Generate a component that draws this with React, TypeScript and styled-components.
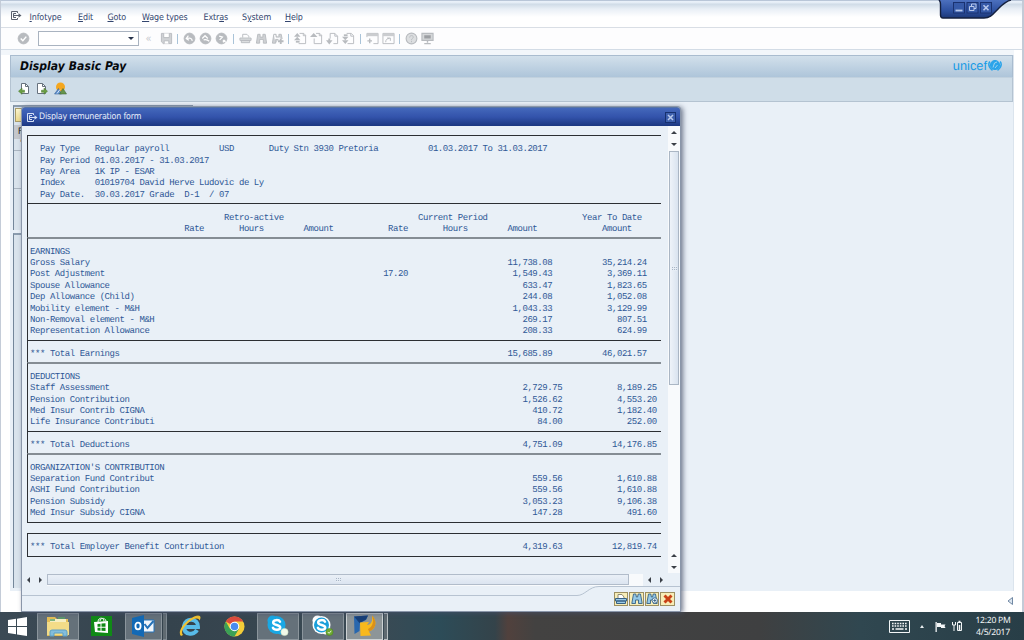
import React from "react";
import styled, { createGlobalStyle } from "styled-components";

const Global = createGlobalStyle`
  * { box-sizing: border-box; }
  body { margin: 0; overflow: hidden; background: #fff; }
  svg { display: block; }
`;

const ui = `"DejaVu Sans Condensed", "DejaVu Sans", sans-serif`;

const Screen = styled.div`
  position: relative;
  width: 1024px;
  height: 640px;
  display: flex;
  flex-direction: column;
  font-family: ${ui};
  text-rendering: geometricPrecision;
`;

const MainWindow = styled.div`
  height: 612px;
  display: flex;
  flex-direction: column;
  background: #fff;
  border-left: 1px solid #c4ccd8;
  border-right: 2px solid #c3cbd7;
  border-top: 1px solid #b9c6d8;
`;

const MenuBar = styled.div`
  height: 27px;
  flex: none;
  padding: 7px 0 0 9px;
  display: flex;
  align-items: center;
  background: linear-gradient(#eaf1fa 0, #e4ecf5 2px, #cfdbe7 3px, #e9eff6 8px, #fff 16px);
  border-bottom: 1px solid #d9dee5;
`;

const MenuItem = styled.div<{ $w: number }>`
  width: ${(p) => p.$w}px;
  flex: none;
  font-size: 8.9px;
  line-height: 12px;
  letter-spacing: -0.12px;
  color: #33466f;
  white-space: nowrap;
  u { text-underline-offset: 1px; text-decoration-thickness: 1px; }
`;

const MenuIcon = styled.div`
  width: 19.5px;
  padding-bottom: 4px;
`;

const ToolBar = styled.div`
  height: 22px;
  flex: none;
  display: flex;
  align-items: center;
  padding-left: 14px;
  background: #fdfdfe;
  border-bottom: 1px solid #d3dce6;
`;

const ToolSlot = styled.div<{ $w?: number }>`
  width: ${(p) => p.$w ?? 16}px;
  display: flex;
  justify-content: center;
  color: #c9ccd0;
  font-size: 11px;
`;

const ToolDivider = styled.div`
  width: 1px;
  height: 10px;
  background: #a9c3d8;
  margin: 0 3.25px;
`;

const CommandField = styled.div`
  width: 101px;
  height: 15px;
  margin-left: 7px;
  border: 1px solid #a9b3c0;
  background: #fff;
  display: flex;
  align-items: center;
  justify-content: flex-end;
  padding-right: 4px;
`;

const Arrow = styled.div<{ $dir: "up" | "down" | "left" | "right"; $size?: number; $color?: string }>`
  width: 0;
  height: 0;
  border: ${(p) => p.$size ?? 3}px solid transparent;
  ${(p) => {
    const c = p.$color ?? "#3a3f47";
    const s = `${(p.$size ?? 3) + 0.5}px solid ${c}`;
    if (p.$dir === "up") return `border-top: 0; border-bottom: ${s};`;
    if (p.$dir === "down") return `border-bottom: 0; border-top: ${s};`;
    if (p.$dir === "left") return `border-left: 0; border-right: ${s};`;
    return `border-right: 0; border-left: ${s};`;
  }}
`;

const Workspace = styled.div`
  flex: 1;
  margin: 0 8px 0 0;
  padding: 5px 0 21px 9px;
  background: linear-gradient(#f2f6fa 0, #f2f6fa 5px, transparent 5px);
`;

const Work = styled.div`
  height: 536px;
  display: flex;
  flex-direction: column;
  background: #e9f0f7;
  border-right: 1px solid #dbe4ed;
`;

const TitleBar = styled.div`
  height: 23px;
  flex: none;
  display: flex;
  align-items: center;
  justify-content: space-between;
  padding: 0 10px 2px 9px;
  border: 1px solid #a9bccf;
  border-bottom-color: #c1d1de;
  background: linear-gradient(#d2e0eb, #aec5da);
`;

const PageTitle = styled.h1`
  margin: 0;
  font: italic bold 12px/16px ${ui};
  letter-spacing: 0.07px;
  color: #05080c;
  white-space: nowrap;
`;

const Brand = styled.div`
  display: flex;
  align-items: center;
  gap: 1px;
  font: 12.8px/14px "Liberation Sans", sans-serif;
  color: #179be6;
`;

const AppBar = styled.div`
  height: 24px;
  flex: none;
  display: flex;
  align-items: center;
  gap: 6px;
  padding: 0 0 2px 7px;
  background: #cfdde8;
  border: 1px solid #b4c3d1;
  border-top: 0;
`;

const Body = styled.div`
  flex: 1;
  padding: 3px 0 4px 3px;
  display: flex;
  flex-direction: column;
  gap: 3px;
`;

const SidePane = styled.div<{ $h: number }>`
  width: 180px;
  height: ${(p) => p.$h}px;
  border-left: 1px solid #74879a;
  border-top: 2px solid #8b9cae;
  background: #d9e3ec;
  color: #111;
  font-size: 9px;
  overflow: hidden;
`;

const PaneButton = styled.div`
  width: 12px;
  height: 14px;
  margin: 1px 0 0 1px;
  background: linear-gradient(#fbf6cf, #ecd98c);
  border: 1px solid #a99c6a;
`;

const PaneHeader = styled.div`
  height: 14px;
  margin-top: 3px;
  padding-left: 4px;
  line-height: 14px;
  background: #c4c7cc;
`;

const PaneRow = styled.div<{ $h: number }>`
  height: ${(p) => p.$h}px;
  padding-left: 6px;
  border-bottom: 1px solid #aab5c1;
`;

const CornerMark = styled.div`
  position: absolute;
  left: 1007px;
  top: 596px;
`;

const WindowControls = styled.div`
  position: absolute;
  left: 938px;
  top: 0;
`;

/* ---------- dialog ---------- */

const Dialog = styled.div`
  position: absolute;
  left: 22px;
  top: 107px;
  width: 658px;
  height: 504px;
  display: flex;
  flex-direction: column;
  background: #e9f0f7;
  border-radius: 3px 3px 0 0;
  box-shadow: 0 0 0 1px #8a96a9, 2px 1px 5px 1px rgba(70, 80, 105, 0.75);
`;

const DialogTitle = styled.div`
  height: 19px;
  flex: none;
  display: flex;
  align-items: center;
  padding: 0 4px 0 4px;
  border-radius: 3px 3px 0 0;
  border-top: 1px solid #5674a6;
  background: linear-gradient(#4468bb, #3353ab 50%, #1b3780);
  color: #e8eefa;
`;

const DialogName = styled.div`
  flex: 1;
  margin-left: 1px;
  font-size: 8.8px;
  letter-spacing: -0.17px;
  white-space: nowrap;
`;

const CloseButton = styled.div`
  width: 11px;
  height: 11px;
  display: flex;
  align-items: center;
  justify-content: center;
  border: 1px solid #16306f;
  background: #3d5fac;
`;

const DialogBody = styled.div`
  height: 447px;
  flex: none;
  display: flex;
`;

const Report = styled.div`
  flex: 1;
  padding: 9px 0 0 5px;
`;

const Section = styled.section<{ $rows: number; $soft?: boolean; $closed?: boolean; $gap?: boolean }>`
  width: 634px;
  height: ${(p) => (p.$rows + 1) * 11.37 + (p.$closed ? 1 : 0)}px;
  margin-top: ${(p) => (p.$gap ? 10.37 : 0)}px;
  padding: ${(p) => (p.$soft ? 7.4 : 8.4)}px 0 0 2px;
  border-left: 1px solid #2c2f33;
  border-top: ${(p) => (p.$soft ? "2px solid #858d94" : "1px solid #2c2f33")};
  border-bottom: ${(p) => (p.$closed ? "1px solid #2c2f33" : "0")};
`;

const Line = styled.pre`
  margin: 0;
  height: 11.37px;
  font: 9px/11.37px "Liberation Mono", monospace;
  letter-spacing: -0.427px;
  color: #2f5896;
`;

const VScroll = styled.div`
  width: 12px;
  flex: none;
  display: flex;
  flex-direction: column;
  align-items: center;
  background: #f8fafc;
`;

const ScrollStep = styled.div<{ $w: number; $h: number }>`
  width: ${(p) => p.$w}px;
  height: ${(p) => p.$h}px;
  flex: none;
  display: flex;
  align-items: center;
  justify-content: center;
`;

const VThumb = styled.div`
  width: 10px;
  height: 234px;
  border: 1px solid #aab6c4;
  background: linear-gradient(90deg, #eef3f9, #d9e3ef);
  display: flex;
  align-items: center;
  justify-content: center;
`;

const Spacer = styled.div`
  flex: 1;
`;

const HScroll = styled.div`
  height: 13px;
  flex: none;
  display: flex;
  align-items: center;
  padding-right: 13px;
`;

const HTrack = styled.div`
  flex: 1;
  height: 12px;
  background: #f8fafc;
`;

const HThumb = styled.div`
  width: 582px;
  height: 11px;
  border: 1px solid #b1bcca;
  background: linear-gradient(#eaf0f7, #dbe4f0);
  display: flex;
  align-items: center;
  justify-content: center;
`;

const Grip = styled.div`
  width: 5px;
  height: 5px;
  background:
    repeating-linear-gradient(#e6edf5 0 1px, transparent 1px 2px),
    repeating-linear-gradient(90deg, #a9b6c6 0 1px, transparent 1px 2px);
`;

const DialogFooter = styled.div`
  flex: 1;
  position: relative;
  display: flex;
  justify-content: flex-end;
  align-items: flex-end;
  gap: 1px;
  padding: 0 5px 5px 0;
`;

const FooterEdge = styled.svg`
  position: absolute;
  left: 0;
  top: 0;
`;

const FooterButton = styled.div`
  width: 14.6px;
  height: 14px;
  display: flex;
  align-items: center;
  justify-content: center;
  border: 1px solid #9c8f62;
  background: #f7edb8;
`;

/* ---------- taskbar ---------- */

const Taskbar = styled.div`
  height: 28px;
  display: flex;
  align-items: center;
  background: linear-gradient(90deg, #3b4a55 0, #35434d 170px, #3a4a54 380px, #2d4c58 440px, #34434a 495px, #51413d 508px, #434241 535px, #3f4041 760px, #304750 860px, #283e47 1024px);
`;

const Task = styled.div<{ $w: number; $ml?: number; $open?: boolean; $active?: boolean }>`
  width: ${(p) => p.$w}px;
  height: 27px;
  flex: none;
  margin-left: ${(p) => p.$ml ?? 0}px;
  display: flex;
  align-items: center;
  justify-content: center;
  ${(p) => p.$open && "background: #65717a; border: 1px solid #8b959c;"}
  ${(p) => p.$active && "background: #8d9598; border: 1px solid #cdd2d4;"}
`;

const TaskStack = styled.div<{ $light?: boolean }>`
  width: 4px;
  height: 27px;
  margin-left: 1px;
  border: 1px solid ${(p) => (p.$light ? "#b9c0c3" : "#7e8991")};
  border-left: 0;
  background: #5f6a71;
`;

const Tray = styled.div`
  margin-left: auto;
  display: flex;
  align-items: center;
  color: #f3f6f7;
`;

const TrayItem = styled.div<{ $w: number }>`
  width: ${(p) => p.$w}px;
  display: flex;
`;

const Clock = styled.div`
  width: 50px;
  margin-right: 6px;
  text-align: center;
  font: 8.6px/12px "Noto Sans", sans-serif;
  letter-spacing: -0.25px;
  white-space: nowrap;
`;

/* ---------- icons ---------- */

const ExitIcon = ({ color }: { color: string }) => (
  <svg width="12" height="11" viewBox="0 0 12 11" fill="none" stroke={color}>
    <path d="M7.500 3V1.500h-6v8h6V8M6 3.500H3.500v4H6M3.500 5.500h6" />
    <path d="M8.500 3.300 11.500 5.500l-3 2.200z" fill={color} stroke="none" />
  </svg>
);

const G = "#b8bbbf";
type Glyph = "check" | "save" | "back" | "exit" | "cancel" | "print" | "find" | "next" | "first" | "prev" | "down" | "last" | "session" | "shortcut" | "help" | "layout";

const glyphs: Record<Glyph, React.ReactNode> = {
  check: <><circle cx="7" cy="7" r="5.8" fill={G} /><path d="m4 7 2.300 2.400L10 5" stroke="#fff" strokeWidth="1.600" /></>,
  save: <><path d="M1.500 1.500h11v11h-9l-2-2z" fill="#d0d2d5" /><path d="M4 1.500v4.500h6V1.500" fill="#fff" /><path d="M4.500 12.500v-3h5v3" fill="#fff" /></>,
  back: <><circle cx="7" cy="7" r="5.800" fill={G} /><path d="m5.800 4-2.300 3 2.800 2M4 7c3-1 5.500-.5 6 2.500" stroke="#fff" strokeWidth="1.300" /></>,
  exit: <><circle cx="7" cy="7" r="5.800" fill={G} /><path d="m3.500 7 3-3 3 3M5 8.500c2.500-.8 4-.5 6 1.500" stroke="#fff" strokeWidth="1.300" /></>,
  cancel: <><circle cx="7" cy="7" r="5.800" fill={G} /><path d="m4.500 4.500 3.500 1-3 3M8.500 8.500l3 2.500M11 8.500 8.500 11" stroke="#fff" strokeWidth="1.300" /></>,
  print: <><path d="M4 6V2.500h4.500l2 2V6" /><path d="M1 6.500h12v2.500H1zM2.500 9h9v2.500h-9z" fill="#dcdee0" /></>,
  find: <path d="M3 2.500h2.500v3h3v-3H11l1.500 9.500H9V8H5v4H1.500z" fill="#cfd1d4" />,
  next: <><path d="M3 2.500h2.500v3h3v-3H11l1 5M5 12H1.500L3 2.500M5 12V8h3" fill="#cfd1d4" /><path d="M10.500 7v6M7.500 10h6" strokeWidth="2" /></>,
  first: <><path d="M6 1.500h4.500l2 2v9H5" /><path d="M10 1.500v2.500h2.500" /><path d="m0 5 3.500-4L7 5zM0 9l3.500-4L7 9z" fill={G} stroke="none" /><path d="M2 10.500h4" strokeWidth="2" /></>,
  prev: <><path d="M6.500 1.500h4l2 2v9h-8V7" /><path d="M10 1.500v2.500h2.500" /><path d="m0 5.500 4-4.500 4 4.500z" fill={G} stroke="none" /></>,
  down: <><path d="M4.500 7V1.500h5l3 3v8H8" /><path d="M9.500 1.500v3h3" /><path d="M3.500 7v3" strokeWidth="2" /><path d="m0 9 3.500 4.500L7 9z" fill={G} stroke="none" /></>,
  last: <><path d="M5 1.500h5l2.500 2.500v8.500H6" /><path d="M9.500 1.500v3h3" /><path d="m0 5 3.500 4L7 5zM0 9l3.500 4L7 9z" fill={G} stroke="none" /><path d="M2 3.500h4" strokeWidth="2" /></>,
  session: <><path d="M1 5.500v-4h12v11H8" /><path d="M1 3h12" strokeWidth="3" stroke="#cbcdd0" /><path d="M4 7v5M1.500 9.500h5" strokeWidth="1.500" /></>,
  shortcut: <><path d="M1 1.500h12v11H1z" /><path d="M1 3h12" strokeWidth="3" stroke="#cbcdd0" /><path d="M4 11c0-3 1.500-4 4-4M5.500 6.500H9v3" /></>,
  help: <><circle cx="7" cy="7" r="5.800" fill="#dcdee0" strokeWidth="1.200" /><path d="M5 6c0-3 4-2.500 4-.5 0 1.200-2 1.500-2 3M7 9.500V11" /></>,
  layout: <><path d="M1 1.500h12V9H1z" fill="#d5d7d9" strokeWidth="1.200" /><path d="M3.500 3.500h7v3.500h-7z" fill="#9c9fa3" stroke="none" /><path d="M7 9v2.500M3.500 12.500h7" strokeWidth="1.500" /></>,
};

const GlyphIcon = ({ name }: { name: Glyph }) => (
  <svg width="13" height="13" viewBox="0 0 14 14" fill="none" stroke={G}>{glyphs[name]}</svg>
);

const groups: Glyph[][] = [
  ["back", "exit", "cancel"],
  ["print", "find", "next"],
  ["first", "prev", "down", "last"],
  ["session", "shortcut"],
  ["help", "layout"],
];

const PageIcon = ({ forward }: { forward?: boolean }) => (
  <svg width="12" height="13" viewBox="0 0 12 13">
    <path d={forward ? "M1.500 1.500h5l3 3v7h-8z" : "M3.500 1.500h4l3 3v7h-7z"} fill="#fff" stroke="#67727e" />
    <path d={forward ? "M6.500 1.500v3h3" : "M7.500 1.500v3h3"} fill="none" stroke="#67727e" />
    <path d={forward ? "M5.500 8.200h2.500V6L11.500 9.200 8 12.300v-2H5.500z" : "M6.500 8.200H4V6L.5 9.200 4 12.300v-2h2.500z"} fill="#6a9e43" stroke="#46752c" strokeWidth=".5" />
  </svg>
);

const OverviewIcon = () => (
  <svg width="13" height="13" viewBox="0 0 13 13">
    <circle cx="6.500" cy="5" r="4.500" fill="#f5a71f" />
    <path d="M.5 12 4.500 6.500 7.500 12z" fill="#5b8fd0" stroke="#3f6597" strokeWidth=".6" />
    <path d="M5.500 12 9 6.500l3.500 5.500z" fill="#65954b" stroke="#44693a" strokeWidth=".6" />
    <path d="m3 11.500 3-4" stroke="#dbe8f4" />
  </svg>
);

const Emblem = () => (
  <svg width="14" height="13" viewBox="0 0 14 13" fill="none" stroke="#2ba4ea">
    <circle cx="7" cy="6" r="4.600" fill="#2ba4ea" />
    <path d="M1.800 2.500C.2 5 .8 8.500 4.500 11.300M12.200 2.500c1.600 2.500 1 6-2.700 8.800" strokeWidth="1.500" />
    <path d="M5 8.500 6.500 4 9 3M7 9l2.500-3" stroke="#b9ddf3" strokeWidth=".8" />
  </svg>
);

const ControlFaces = () => (
  <svg width="84" height="21" viewBox="0 0 84 21">
    <defs>
      <linearGradient id="tabFill" x1="0" y1="0" x2="0" y2="1">
        <stop offset="0" stopColor="#4c70be" /><stop offset=".6" stopColor="#2d509f" /><stop offset="1" stopColor="#1c3877" />
      </linearGradient>
    </defs>
    <path d="M0 0h73c-5 1-8 4-12 8-6 6-8 10-15 10H5c-2 0-2.500-1-2.500-3V4C2.500 2 2 0 0 0z" fill="url(#tabFill)" />
    <path d="M1 0c1 1 1.500 2 1.500 4v11c0 2 .5 3 2.500 3h41c7 0 9-4 15-10 4-4 7-7 12-8" fill="none" stroke="#15213f" strokeWidth="1.400" />
    <g fill="#365aa8" stroke="#1a3270">
      <rect x="15.500" y="2.500" width="11" height="10.500" /><rect x="29" y="2.500" width="11" height="10.500" /><rect x="42.500" y="2.500" width="11" height="10.500" />
    </g>
    <g fill="none" stroke="#b9c9ec">
      <path d="M17.500 10.500h7" strokeWidth="1.800" />
      <path d="M31.500 6.500h4.500v4h-4.500zM33.500 6V4h4.500v4.500H36" />
      <path d="m45.500 5.200 5 5M50.500 5.200l-5 5" strokeWidth="1.600" />
    </g>
  </svg>
);

const FootPrint = () => (
  <svg width="12" height="12" viewBox="0 0 12 12" stroke="#376184" fill="#9ccbe8">
    <path d="M3 5V1.500h4L9 4v1" fill="#fff" stroke="#8d8b74" /><path d="M.5 5.500h11V8H.5zM1.500 8h9v2.500h-9z" />
  </svg>
);
const FootFind = ({ more }: { more?: boolean }) => (
  <svg width="12" height="12" viewBox="0 0 12 12" stroke="#376184" fill="#95c9e8" strokeWidth=".9">
    <path d="M2.500 1h2.300l.6 3h1.200l.6-3h2.300l1.700 9.500H7.500V7h-3v3.500H.8z" />
    {more && <><circle cx="8.800" cy="7.500" r="2.700" fill="#f1f8fd" /><path d="M8.800 6v3M7.300 7.500h3" /></>}
  </svg>
);
const FootCancel = () => (
  <svg width="10" height="10" viewBox="0 0 10 10" stroke="#c94116" strokeWidth="2.900">
    <path d="m1.500 1.500 7 7M8.500 1.500l-7 7" />
  </svg>
);

const WindowsLogo = () => (
  <svg width="20" height="19" viewBox="0 0 20 19" fill="#fff">
    <path d="M0 3 8 1.800V9H0zM9 1.700 19 0v9H9zM0 10h8v7.200L0 16zM9 10h10v9L9 17.400z" />
  </svg>
);
const ExplorerLogo = () => (
  <svg width="25" height="23" viewBox="0 0 25 23">
    <path d="M1 2h8l2 2h11v17H1z" fill="#e3bd55" />
    <path d="M4 4h16v14H4z" fill="#f7efc3" /><path d="M4 5h5M12 3h7" stroke="#58a26a" strokeWidth="1.500" />
    <path d="M1 7h22v13H1z" fill="#f3dc88" />
    <path d="M4 21v-4q0-2 2-2h13q2 0 2 2v4h-4v-3H8v3z" fill="#83bddc" stroke="#5c9fc5" />
  </svg>
);
const StoreLogo = () => (
  <svg width="21" height="22" viewBox="0 0 21 22">
    <path d="M0 1h21v20H0z" fill="#108a16" /><path d="m3 7 14-1v12L4 17z" fill="#fff" />
    <path d="M7 7c0-5 6-5 6-.5M9 6c0-3 5-4 6 0" fill="none" stroke="#fff" />
    <path d="m6.500 9 3-.3v3h-3zM10.500 8.600l4-.4v3.500h-4zM6.500 12.700h3v3l-3-.3zM10.500 12.700h4V16l-4-.3z" fill="#108a16" />
  </svg>
);
const OutlookLogo = () => (
  <svg width="23" height="22" viewBox="0 0 23 22">
    <path d="M10 5h12v12H10z" fill="#f1f6fb" stroke="#2572b8" /><path d="m12.500 9 3 4 6-7" fill="none" stroke="#2572b8" strokeWidth="2" />
    <path d="M0 3 12 0v22L0 19z" fill="#1269b5" /><ellipse cx="6" cy="11" rx="2.600" ry="3.300" fill="none" stroke="#fff" strokeWidth="1.800" />
  </svg>
);
const ExplorerE = () => (
  <svg width="24" height="24" viewBox="0 0 24 24" fill="none">
    <path d="M5 13h15c.5-9-13-10-14-1-.5 9 10 10 13 4" stroke="#58bbe8" strokeWidth="4" />
    <path d="M3 22C-2 17 10 3 20 1.500c3 0 3 2.500 1.500 5C21 3 15 4 9 10c-5 5-6 9-4 11z" fill="#f1c230" />
  </svg>
);
const ChromeLogo = () => (
  <svg width="21" height="21" viewBox="0 0 22 22">
    <circle cx="11" cy="11" r="10.500" fill="#f4cd38" />
    <path d="M11 11 1.900 5.700A10.500 10.500 0 0 1 20.100 5.700H11z" fill="#dc4a3d" />
    <path d="M1.900 5.700A10.500 10.500 0 0 0 11 21.500l4.500-8L11 11 6 13z" fill="#3ba156" />
    <circle cx="11" cy="11" r="5" fill="#fff" /><circle cx="11" cy="11" r="3.900" fill="#4a8bee" />
  </svg>
);
const SkypeLogo = ({ business }: { business?: boolean }) => (
  <svg width="24" height="24" viewBox="0 0 24 24">
    <g fill={business ? "#fff" : "#19a8e4"}>
      <circle cx="10.500" cy="11" r="9" /><circle cx="6.500" cy="6.500" r="5" /><circle cx="14.500" cy="15.500" r="5" />
    </g>
    {business && <circle cx="10.500" cy="11" r="7.500" fill="#1a9fda" />}
    <path d="M14 7.700c-1-2.200-6.800-2.200-6.800.7 0 3.300 7 1.800 7 5.100 0 3-6 3-7.300.3" fill="none" stroke="#fff" strokeWidth="2.500" strokeLinecap="round" />
    <circle cx="18.500" cy="18" r="3.600" fill={business ? "#6eaa32" : "#f2f9e9"} stroke={business ? "#4b8522" : "#cfe4c5"} strokeWidth=".6" />
    {business && <path d="m16.800 18 1.300 1.300 2.200-2.500" fill="none" stroke="#e5f3d5" />}
  </svg>
);
const SapLogo = () => (
  <svg width="24" height="24" viewBox="0 0 24 24">
    <path d="M1 2.500 15 1.500 13 6 7 9l-.5 8L1.500 20z" fill="#2867ae" />
    <path d="m1 2.500 14-1-2 4L6.500 9z" fill="#163e77" />
    <path d="M7 8.500 16 8l-2 3c4 0 6-4 5-9.500 5 5 5 13-3 16l2 4-10.500.5z" fill="#f8b91c" />
    <path d="M19 1.500c5 5 5 13-3 16l-1-2.500c5-2 6-8 4-13.500z" fill="#d9901a" />
  </svg>
);

/* ---------- report data ---------- */

type Cell = [column: number, text: string];

const compose = (cells: Cell[]) =>
  cells.reduce((line, [column, text]) => line.padEnd(column) + text, "");

const amounts = (label: string, current: string, year: string, shift = 0, rate?: string): Cell[] => [
  [0, label],
  ...(rate ? ([[71, rate]] as Cell[]) : []),
  [105 + shift - current.length, current],
  [124 + shift - year.length, year],
];

interface Block {
  lines: Cell[][];
  soft?: boolean;
  closed?: boolean;
  gap?: boolean;
}

const blocks: Block[] = [
  {
    lines: [
      [[2, "Pay Type"], [13, "Regular payroll"], [38, "USD"], [48, "Duty Stn 3930 Pretoria"], [80, "01.03.2017 To 31.03.2017"]],
      [[2, "Pay Period 01.03.2017 - 31.03.2017"]],
      [[2, "Pay Area"], [13, "1K IP - ESAR"]],
      [[2, "Index"], [13, "01019704 David Herve Ludovic de Ly"]],
      [[2, "Pay Date."], [13, "30.03.2017 Grade  D-1  / 07"]],
    ],
  },
  {
    lines: [
      [[39, "Retro-active"], [78, "Current Period"], [111, "Year To Date"]],
      [[31, "Rate"], [42, "Hours"], [55, "Amount"], [72, "Rate"], [83, "Hours"], [96, "Amount"], [115, "Amount"]],
    ],
  },
  {
    soft: true,
    lines: [
      [[0, "EARNINGS"]],
      amounts("Gross Salary", "11,738.08", "35,214.24"),
      amounts("Post Adjustment", "1,549.43", "3,369.11", 0, "17.20"),
      amounts("Spouse Allowance", "633.47", "1,823.65"),
      amounts("Dep Allowance (Child)", "244.08", "1,052.08"),
      amounts("Mobility element - M&H", "1,043.33", "3,129.99"),
      amounts("Non-Removal element - M&H", "269.17", "807.51"),
      amounts("Representation Allowance", "208.33", "624.99"),
    ],
  },
  { lines: [amounts("*** Total Earnings", "15,685.89", "46,021.57")] },
  {
    soft: true,
    lines: [
      [[0, "DEDUCTIONS"]],
      amounts("Staff Assessment", "2,729.75", "8,189.25", 2),
      amounts("Pension Contribution", "1,526.62", "4,553.20", 2),
      amounts("Med Insur Contrib CIGNA", "410.72", "1,182.40", 2),
      amounts("Life Insurance Contributi", "84.00", "252.00", 2),
    ],
  },
  { lines: [amounts("*** Total Deductions", "4,751.09", "14,176.85", 2)] },
  {
    soft: true,
    closed: true,
    lines: [
      [[0, "ORGANIZATION'S CONTRIBUTION"]],
      amounts("Separation Fund Contribut", "559.56", "1,610.88", 2),
      amounts("ASHI Fund Contribution", "559.56", "1,610.88", 2),
      amounts("Pension Subsidy", "3,053.23", "9,106.38", 2),
      amounts("Med Insur Subsidy CIGNA", "147.28", "491.60", 2),
    ],
  },
  { gap: true, closed: true, lines: [amounts("*** Total Employer Benefit Contribution", "4,319.63", "12,819.74", 2)] },
];

const menus: [string, string, string, number][] = [
  ["", "I", "nfotype", 48.5],
  ["", "E", "dit", 29.5],
  ["", "G", "oto", 34.5],
  ["", "W", "age types", 61.5],
  ["Extr", "a", "s", 38.5],
  ["S", "y", "stem", 43],
  ["", "H", "elp", 30],
];

export default function App() {
  return (
    <Screen>
      <Global />
      <MainWindow>
        <MenuBar>
          <MenuIcon><ExitIcon color="#59606e" /></MenuIcon>
          {menus.map(([a, b, c, w]) => (
            <MenuItem key={c} $w={w}>{a}<u>{b}</u>{c}</MenuItem>
          ))}
        </MenuBar>
        <ToolBar>
          <ToolSlot><GlyphIcon name="check" /></ToolSlot>
          <CommandField><Arrow $dir="down" $color="#26324a" /></CommandField>
          <ToolSlot $w={19}>«</ToolSlot>
          <ToolSlot><GlyphIcon name="save" /></ToolSlot>
          {groups.map((group) => (
            <React.Fragment key={group[0]}>
              <ToolDivider />
              {group.map((name) => <ToolSlot key={name}><GlyphIcon name={name} /></ToolSlot>)}
            </React.Fragment>
          ))}
        </ToolBar>
        <Workspace>
          <Work>
            <TitleBar>
              <PageTitle>Display Basic Pay</PageTitle>
              <Brand>unicef<Emblem /></Brand>
            </TitleBar>
            <AppBar><PageIcon /><PageIcon forward /><OverviewIcon /></AppBar>
            <Body>
              <SidePane $h={125}>
                <PaneButton />
                <PaneHeader>F</PaneHeader>
                <PaneRow $h={12}>'</PaneRow>
                <PaneRow $h={38} />
              </SidePane>
              <SidePane $h={355} />
            </Body>
          </Work>
        </Workspace>
      </MainWindow>

      <WindowControls><ControlFaces /></WindowControls>
      <CornerMark>
        <svg width="7" height="10" viewBox="0 0 7 10"><path d="M5.500 1.500v7L1 5z" fill="#dbe5ef" stroke="#7189a4" /></svg>
      </CornerMark>

      <Dialog>
        <DialogTitle>
          <ExitIcon color="#d5e0f5" />
          <DialogName>Display remuneration form</DialogName>
          <CloseButton>
            <svg width="7" height="7" viewBox="0 0 7 7"><path d="m1 1 5 5M6 1 1 6" stroke="#b9c9ec" strokeWidth="1.500" /></svg>
          </CloseButton>
        </DialogTitle>
        <DialogBody>
          <Report>
            {blocks.map((block, i) => (
              <Section key={i} $rows={block.lines.length} $soft={block.soft} $closed={block.closed} $gap={block.gap}>
                {block.lines.map((line, j) => <Line key={j}>{compose(line)}</Line>)}
              </Section>
            ))}
          </Report>
          <VScroll>
            <ScrollStep $w={12} $h={12}><Arrow $dir="up" /></ScrollStep>
            <ScrollStep $w={12} $h={13}><Arrow $dir="down" /></ScrollStep>
            <VThumb><Grip /></VThumb>
            <Spacer />
            <ScrollStep $w={12} $h={13}><Arrow $dir="up" /></ScrollStep>
            <ScrollStep $w={12} $h={11}><Arrow $dir="down" /></ScrollStep>
          </VScroll>
        </DialogBody>
        <HScroll>
          <ScrollStep $w={12} $h={12}><Arrow $dir="left" /></ScrollStep>
          <ScrollStep $w={13} $h={12}><Arrow $dir="right" /></ScrollStep>
          <HTrack><HThumb><Grip /></HThumb></HTrack>
          <ScrollStep $w={12} $h={12}><Arrow $dir="left" /></ScrollStep>
          <ScrollStep $w={12} $h={12}><Arrow $dir="right" /></ScrollStep>
        </HScroll>
        <DialogFooter>
          <FooterEdge width="658" height="12" fill="none" stroke="#b7c3d1"><path d="M0 9.500H555c8 0 12-9 22-9H658" /></FooterEdge>
          <FooterButton><FootPrint /></FooterButton>
          <FooterButton><FootFind /></FooterButton>
          <FooterButton><FootFind more /></FooterButton>
          <FooterButton><FootCancel /></FooterButton>
        </DialogFooter>
      </Dialog>

      <Taskbar>
        <Task $w={20} $ml={8}><WindowsLogo /></Task>
        <Task $w={42} $ml={9} $open><ExplorerLogo /></Task>
        <Task $w={21} $ml={12}><StoreLogo /></Task>
        <Task $w={37} $ml={13} $open><OutlookLogo /></Task>
        <TaskStack />
        <Task $w={24} $ml={11}><ExplorerE /></Task>
        <Task $w={21} $ml={22}><ChromeLogo /></Task>
        <Task $w={42} $ml={12} $open><SkypeLogo /></Task>
        <Task $w={42} $ml={3} $open><SkypeLogo business /></Task>
        <Task $w={37} $ml={2} $active><SapLogo /></Task>
        <TaskStack $light />
        <Tray>
          <TrayItem $w={31}>
            <svg width="21" height="13" viewBox="0 0 21 13" fill="none" stroke="#f3f6f7">
              <path d="M.5.500h20v12H.500z" /><path d="M3 3.500h15M3 6h15" strokeWidth="1.500" strokeDasharray="1.600 1" /><path d="M3 9h2M6.500 9h8M16 9h2" strokeWidth="1.500" />
            </svg>
          </TrayItem>
          <TrayItem $w={15}><Arrow $dir="up" $size={2.5} $color="#e8edef" /></TrayItem>
          <TrayItem $w={17}>
            <svg width="11" height="11" viewBox="0 0 11 11"><path d="M.5 1h1.300v10H.500zM2 2h4v1.500h4.500L9.500 5l1 2H6V6H2z" fill="#f3f6f7" /></svg>
          </TrayItem>
          <TrayItem $w={16}>
            <svg width="10" height="12" viewBox="0 0 10 12" fill="none" stroke="#f3f6f7"><path d="M.5 2v3h3V2M2 5v6" /><path d="M5.500 2.500h4v8h-4z" /><path d="M6.500 1.500h2M7.500 5v5" strokeWidth="1.500" /></svg>
          </TrayItem>
          <Clock>12:20 PM<br />4/5/2017</Clock>
        </Tray>
      </Taskbar>
    </Screen>
  );
}
